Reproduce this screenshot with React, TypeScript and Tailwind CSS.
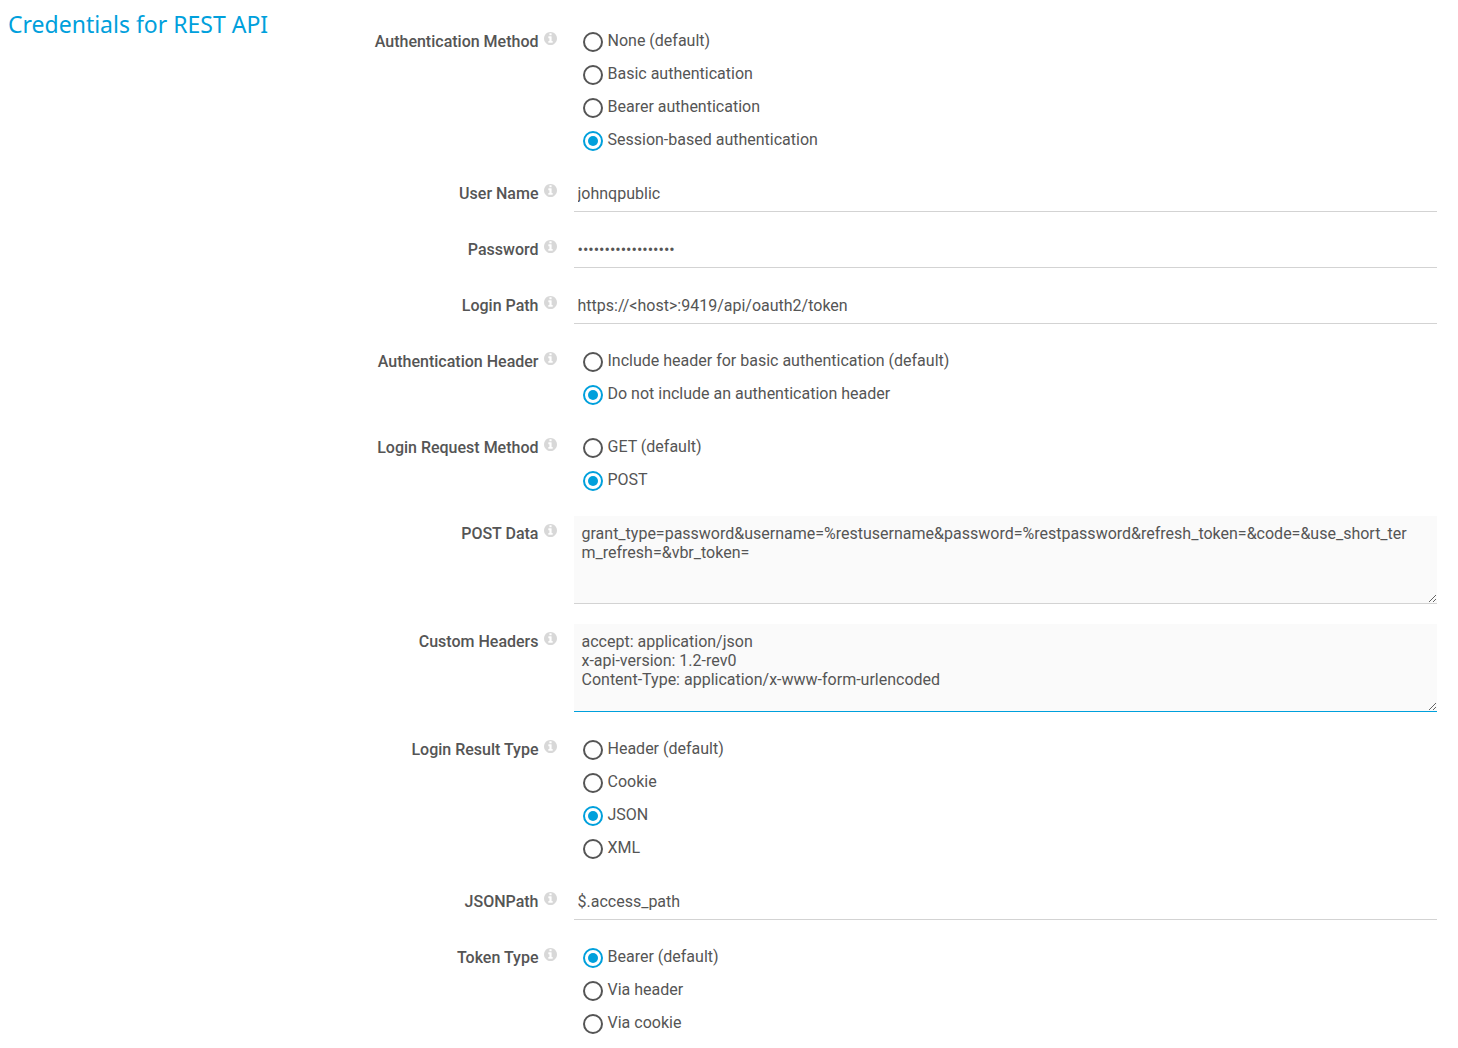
import { useState } from 'react';
import type { ReactNode } from 'react';

const initialValues = {
    authMethod: 'Session-based authentication',
    userName: 'johnqpublic',
    password: 'correcthorsebatter',
    loginPath: 'https://<host>:9419/api/oauth2/token',
    authHeader: 'Do not include an authentication header',
    requestMethod: 'POST',
    postData:
        'grant_type=password&username=%restusername&password=%restpassword&refresh_token=&code=&use_short_term_refresh=&vbr_token=',
    customHeaders:
        'accept: application/json\nx-api-version: 1.2-rev0\nContent-Type: application/x-www-form-urlencoded',
    resultType: 'JSON',
    jsonPath: '$.access_path',
    tokenType: 'Bearer (default)',
};

type FieldName = keyof typeof initialValues;

type Field = {
    name: FieldName;
    label: string;
    type: 'radio' | 'text' | 'password' | 'textarea';
    options?: string[];
};

const fields: Field[] = [
    {
        name: 'authMethod',
        label: 'Authentication Method',
        type: 'radio',
        options: [
            'None (default)',
            'Basic authentication',
            'Bearer authentication',
            'Session-based authentication',
        ],
    },
    { name: 'userName', label: 'User Name', type: 'text' },
    { name: 'password', label: 'Password', type: 'password' },
    { name: 'loginPath', label: 'Login Path', type: 'text' },
    {
        name: 'authHeader',
        label: 'Authentication Header',
        type: 'radio',
        options: [
            'Include header for basic authentication (default)',
            'Do not include an authentication header',
        ],
    },
    {
        name: 'requestMethod',
        label: 'Login Request Method',
        type: 'radio',
        options: ['GET (default)', 'POST'],
    },
    { name: 'postData', label: 'POST Data', type: 'textarea' },
    { name: 'customHeaders', label: 'Custom Headers', type: 'textarea' },
    {
        name: 'resultType',
        label: 'Login Result Type',
        type: 'radio',
        options: ['Header (default)', 'Cookie', 'JSON', 'XML'],
    },
    { name: 'jsonPath', label: 'JSONPath', type: 'text' },
    {
        name: 'tokenType',
        label: 'Token Type',
        type: 'radio',
        options: ['Bearer (default)', 'Via header', 'Via cookie'],
    },
];

function InfoIcon() {
    return (
        <svg viewBox="128 128 1536 1536" fill="currentColor" className="size-[13px]" aria-hidden="true">
            <path d="M1152 1376v-160q0-14-9-23t-23-9h-96v-512q0-14-9-23t-23-9h-320q-14 0-23 9t-9 23v160q0 14 9 23t23 9h96v320h-96q-14 0-23 9t-9 23v160q0 14 9 23t23 9h448q14 0 23-9t9-23zm-128-896v-160q0-14-9-23t-23-9h-192q-14 0-23 9t-9 23v160q0 14 9 23t23 9h192q14 0 23-9t9-23zm640 416q0 209-103 385.5t-279.5 279.5-385.5 103-385.5-103-279.5-279.5-103-385.5 103-385.5 279.5-279.5 385.5-103 385.5 103 279.5 279.5 103 385.5z" />
        </svg>
    );
}

function FieldRow({ field, children }: { field: Field; children: ReactNode }) {
    const labelClass = 'pt-2 text-right font-medium leading-5';

    return (
        <div className="flex items-start">
            <div className="flex w-48 shrink-0 items-start justify-end gap-[5px]">
                {field.type === 'radio' ? (
                    <span id={`${field.name}-label`} className={labelClass}>
                        {field.label}
                    </span>
                ) : (
                    <label htmlFor={field.name} className={labelClass}>
                        {field.label}
                    </label>
                )}
                <button type="button" aria-label={`Help for ${field.label}`} className="pt-2 text-[#d8d8d8]">
                    <InfoIcon />
                </button>
            </div>
            <div className="ml-[17px] min-w-0 flex-1">{children}</div>
        </div>
    );
}

export default function App() {
    const [values, setValues] = useState(initialValues);

    const update = (name: FieldName, value: string) => {
        setValues((prev) => ({ ...prev, [name]: value }));
    };

    const renderControl = (field: Field) => {
        if (field.type === 'radio') {
            return (
                <div role="radiogroup" aria-labelledby={`${field.name}-label`} className="pl-[9px]">
                    {field.options?.map((option) => (
                        <label key={option} className="flex h-[33px] w-fit items-start gap-[5px]">
                            <input
                                type="radio"
                                name={field.name}
                                value={option}
                                checked={values[field.name] === option}
                                onChange={() => update(field.name, option)}
                                className="mt-2 size-5 shrink-0 appearance-none rounded-full border-2 border-[#555] bg-clip-content p-[3px] checked:border-[#00a0dc] checked:bg-[#00a0dc]"
                            />
                            <span className="pt-[7px] leading-5">{option}</span>
                        </label>
                    ))}
                </div>
            );
        }

        if (field.type === 'textarea') {
            return (
                <textarea
                    id={field.name}
                    value={values[field.name]}
                    onChange={(e) => update(field.name, e.target.value)}
                    className={
                        field.name === 'customHeaders'
                            ? 'block h-[88px] w-full resize break-all border-b border-[#00a0dc] bg-[#fafafa] pl-2 pr-6 pt-2 leading-[19px] outline-none'
                            : 'block h-[88px] w-full resize break-all border-b border-[#d3d3d3] bg-[#fafafa] pl-2 pr-6 pt-2 leading-[19px] outline-none'
                    }
                />
            );
        }

        return (
            <input
                id={field.name}
                type={field.type}
                value={values[field.name]}
                onChange={(e) => update(field.name, e.target.value)}
                className="block h-9 w-full border-b border-[#d3d3d3] px-1 outline-none"
            />
        );
    };

    return (
        <form className="flex bg-white font-['Roboto',sans-serif] text-base text-[#555]">
            {/* Section title */}
            <div className="w-1/4 shrink-0 pl-2 pt-2">
                <h2 className="font-['Noto_Sans',sans-serif] text-[23px] leading-8 text-[#00a0dc]">
                    Credentials for REST API
                </h2>
            </div>

            {/* Settings */}
            <div className="flex min-w-0 flex-1 flex-col gap-5 pr-[21px] pt-6">
                {fields.map((field) => (
                    <FieldRow key={field.name} field={field}>
                        {renderControl(field)}
                    </FieldRow>
                ))}
            </div>
        </form>
    );
}
